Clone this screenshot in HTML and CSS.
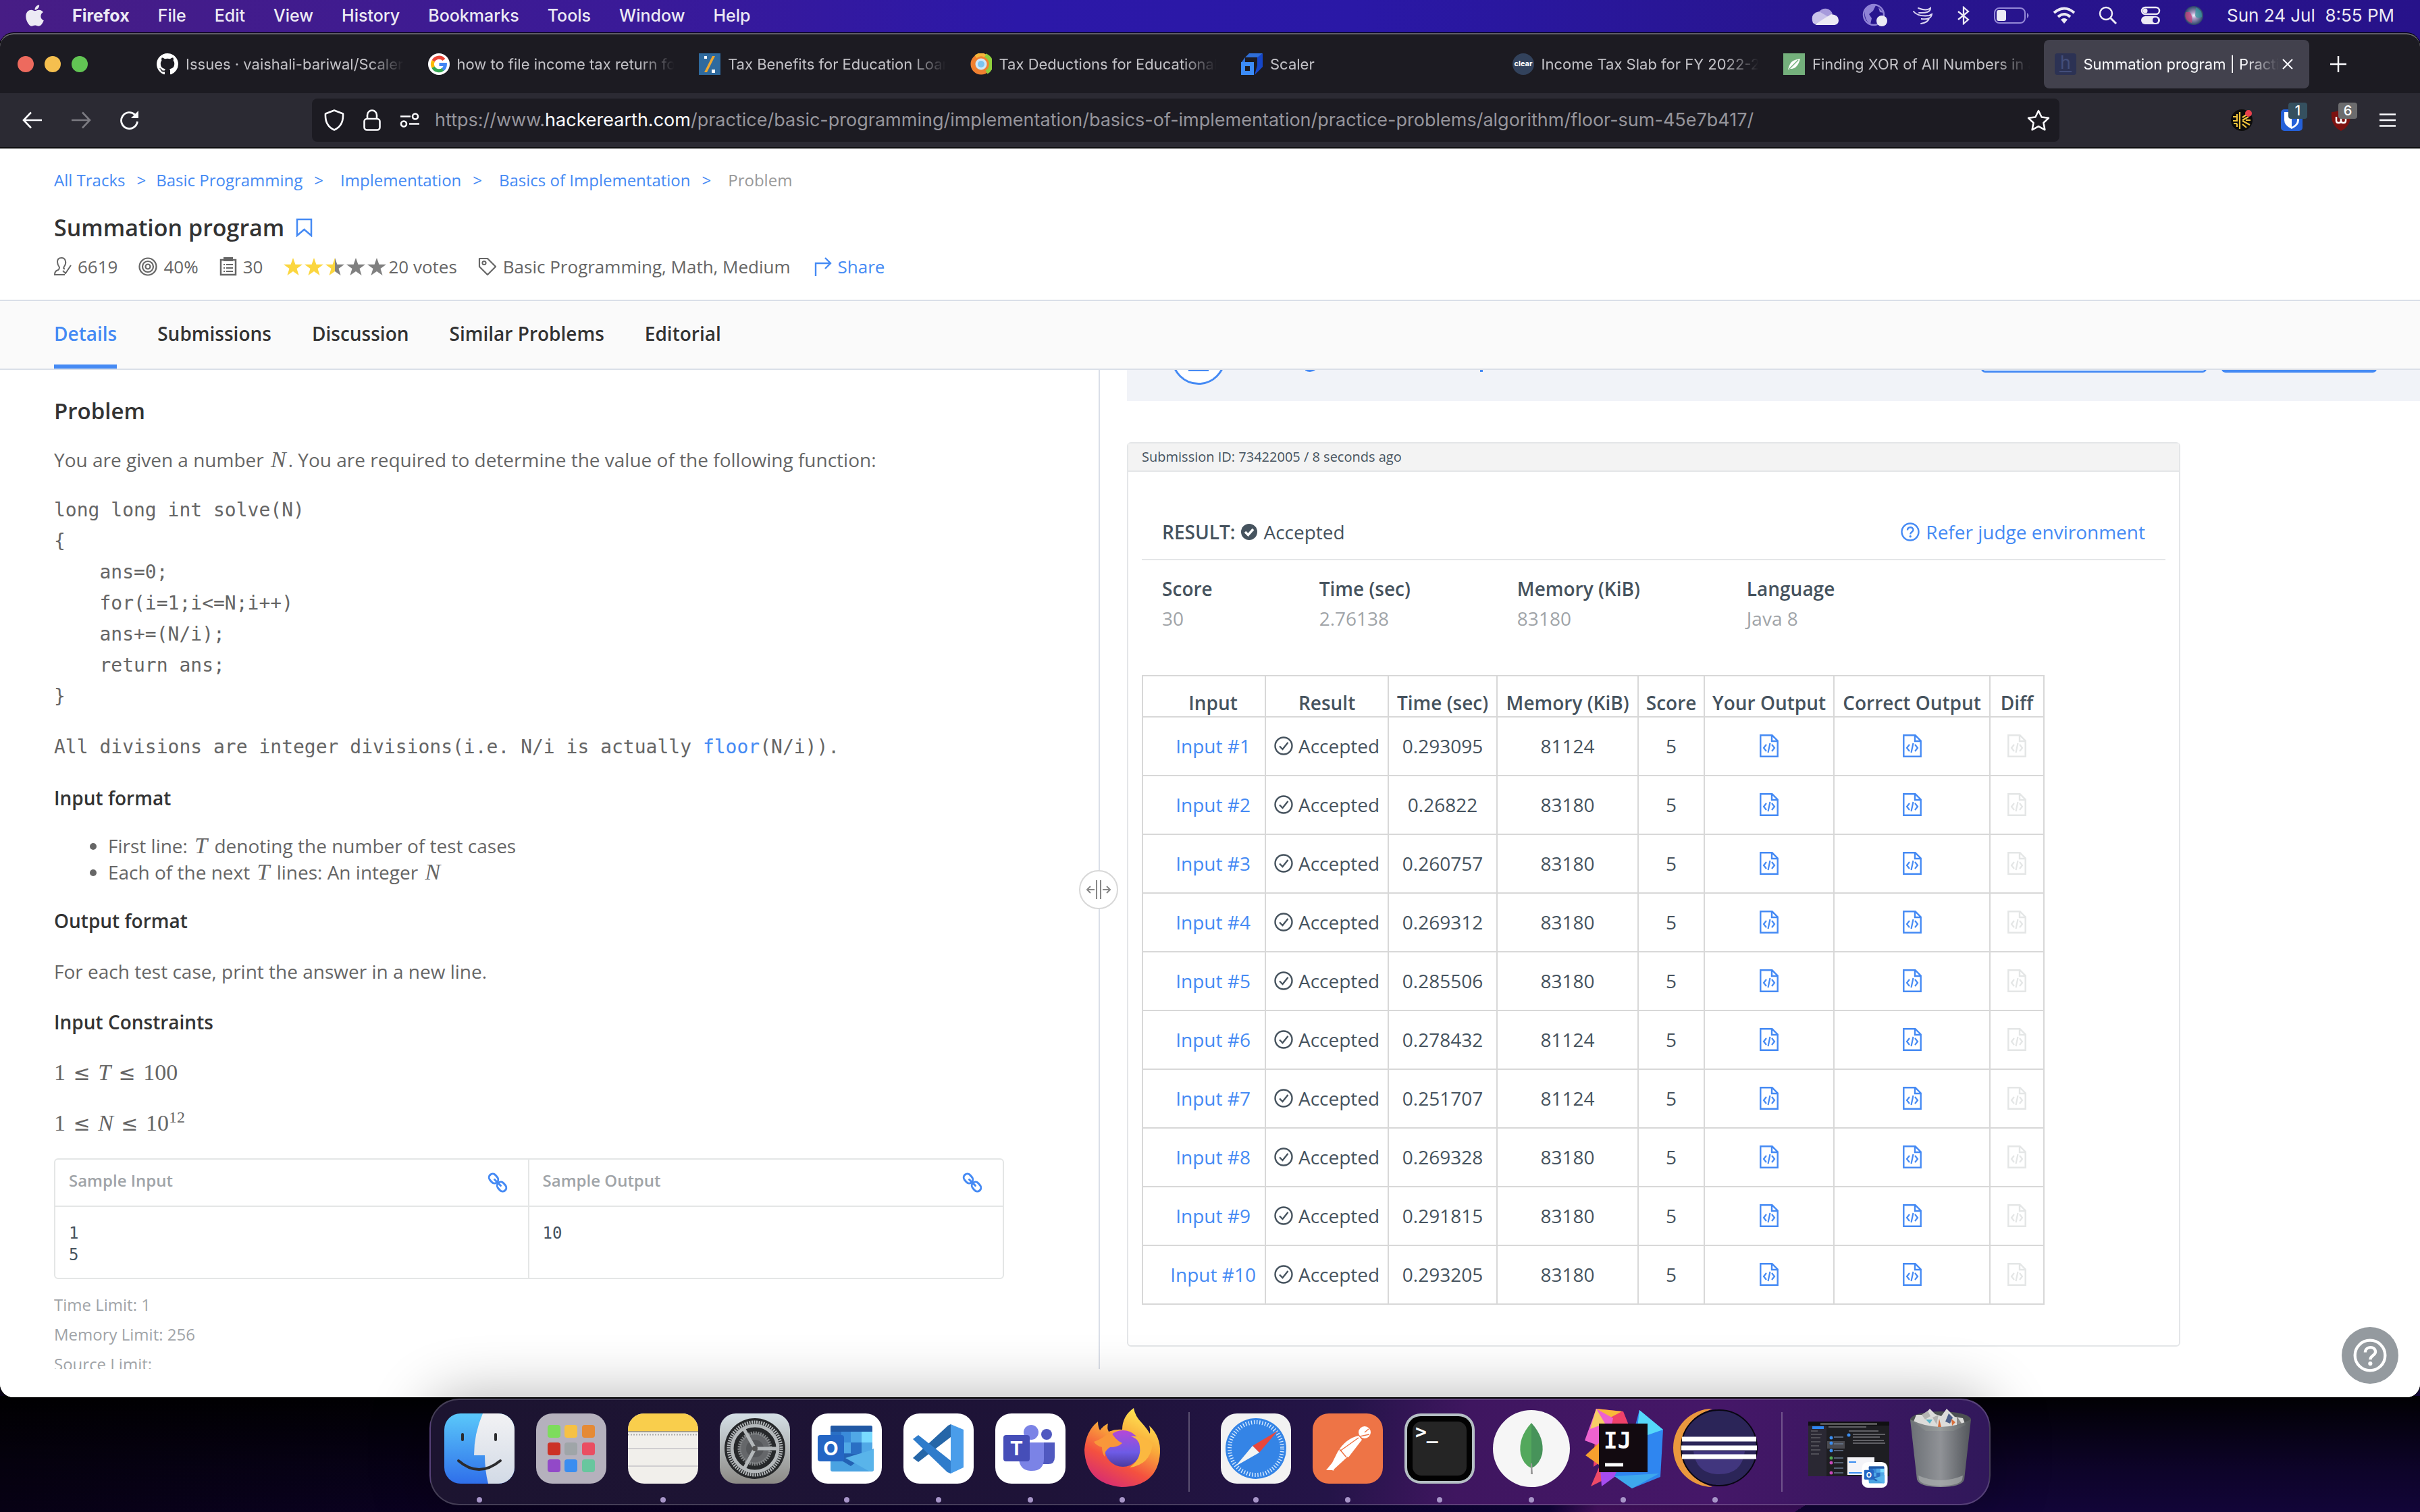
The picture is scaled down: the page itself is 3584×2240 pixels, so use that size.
FILE: index.html
```html
<!DOCTYPE html>
<html lang="en">
<head>
<meta charset="utf-8">
<title>Summation program | Practice Problems</title>
<link rel="stylesheet" href="styles.css">
</head>
<body>
<svg class="sprite" aria-hidden="true">
  <symbol id="doc" viewBox="0 0 28 34"><path d="M1.300 1.300h17.200l8.200 8.200v23.200H1.300z M18 1.500v8.500h8.500" fill="none" stroke="currentColor" stroke-width="2.400"/><path d="M10 15l-4 5 4 5 M18 15l4 5-4 5 M15.500 13l-3 14" fill="none" stroke="currentColor" stroke-width="2.200"/></symbol>
  <symbol id="ok" viewBox="0 0 28 28"><circle cx="14" cy="14" r="12.500" fill="none" stroke="currentColor" stroke-width="2.400"/><path d="M8 14.500l4.500 4.500 8-10" fill="none" stroke="currentColor" stroke-width="2.400"/></symbol>
  <symbol id="help" viewBox="0 0 28 28"><circle cx="14" cy="14" r="12.500" fill="none" stroke="currentColor" stroke-width="2.400"/><path d="M10 11.500c0-5.500 8.500-5.500 8.500-.5 0 3-4.300 3-4.300 6.500" fill="none" stroke="currentColor" stroke-width="2.400"/><circle cx="14.200" cy="20.800" r="1.700" fill="currentColor"/></symbol>
  <symbol id="chain" viewBox="0 0 30 30"><g fill="none" stroke="currentColor" stroke-width="3" stroke-linecap="round"><rect x="1.500" y="3.500" width="15" height="11" rx="5.500" transform="rotate(50 9 9)"/><rect x="13.500" y="15.500" width="15" height="11" rx="5.500" transform="rotate(50 21 21)"/><path d="M10.500 10.500l9 9"/></g></symbol>
  <symbol id="star" viewBox="0 0 28 26"><path d="M14 0l3.400 9.800H28l-8.500 6.300L22.600 26 14 20l-8.600 6 3.100-9.900L0 9.800h10.600z" fill="currentColor"/></symbol>
  <symbol id="outlook" viewBox="0 0 104 104"><rect width="104" height="104" rx="24" fill="#fff"/><path d="M31 18h56q3 0 3 3v56H28V21q0-3 3-3z" fill="#2a6fc4"/><path d="M30 18h57q3 0 3 3v6H28v-6q0-3 2-3z" fill="#2158a4"/><path d="M44 27h14v16H44z" fill="#3a8bd9"/><path d="M58 27h16v16H58z M44 43h14v16H44z" fill="#50a8e6"/><path d="M74 27h16v16H74z" fill="#79daff"/><path d="M74 43h16v16H74z" fill="#50a8e6"/><path d="M28 60l62 0-31 24z" fill="#2362b4"/><path d="M92 52v31q0 3-3 3H31q-3 0-3-3V60l30 18z" fill="#4aa3e2"/><path d="M92 53v31q-2 2-6 2L50 66z" fill="#59b4ea"/><rect x="9" y="32" width="39" height="39" rx="4" fill="#2466c4"/><text x="28.500" y="62" text-anchor="middle" class="g-sans" font-size="29" font-weight="700" fill="#fff">O</text></symbol>
</svg>

<header class="menubar">
  <nav class="menus">
    <svg class="apple" viewBox="0 0 384 512"><path fill="#eceaf4" d="M318.700 268.700c-.2-36.700 16.400-64.400 50-84.800-18.800-26.900-47.200-41.700-84.700-44.600-35.500-2.800-74.300 20.700-88.500 20.700-15 0-49.400-19.700-76.400-19.700C63.300 141.200 4 184.800 4 273.500q0 39.300 14.400 81.200c12.800 36.700 59 126.700 107.200 125.200 25.200-.6 43-17.900 75.800-17.900 31.800 0 48.300 17.900 76.400 17.900 48.600-.7 90.400-82.500 102.600-119.300-65.200-30.700-61.700-90-61.700-91.900zm-56.600-164.200c27.300-32.400 24.800-61.900 24-72.500-24.100 1.400-52 16.400-67.900 34.900-17.500 19.800-27.800 44.300-25.600 71.900 26.100 2 49.900-11.400 69.500-34.300z"/></svg>
    <button class="menu app">Firefox</button><button class="menu">File</button><button class="menu">Edit</button><button class="menu">View</button><button class="menu">History</button><button class="menu">Bookmarks</button><button class="menu">Tools</button><button class="menu">Window</button><button class="menu">Help</button>
  </nav>
  <div class="status">
    <svg width="42" height="28" viewBox="0 0 42 28"><path d="M11 10a11 10 0 0 1 21 2l-13 6-12 6z" fill="#a79bdc"/><path d="M3 25q-5-14 9-17l14 8-20 11z" fill="#c9c2ea"/><path d="M6 27l24-15q11 1 11 9 0 6-6 7H8z" fill="#eceaf4"/></svg>
    <svg width="40" height="36" viewBox="0 0 40 36"><circle cx="17" cy="17" r="15" fill="none" stroke="#8f82d6" stroke-width="2.500"/><path d="M4 8q8-7 16-5l-4 8-6 5 4 6-2 9Q2 24 4 8z M24 6l8 8-6-1z" fill="#8f82d6"/><circle cx="29" cy="26" r="8" fill="#eceaf4"/></svg>
    <svg width="32" height="28" viewBox="0 0 32 28"><path d="M9 3q12 5 18 0 0 8-17 7M2 8q6 8 24 6 0-1 3-2-1 9-16 7 8 1 12-1-1 6-12 8" fill="none" stroke="#dcd7f2" stroke-width="2" stroke-linecap="round"/></svg>
    <svg width="20" height="28" viewBox="0 0 20 28"><path d="M2 8l15 12-7 6V2l7 6L2 20" fill="none" stroke="#eceaf4" stroke-width="2.300"/></svg>
    <svg width="54" height="26" viewBox="0 0 54 26"><rect x="2" y="2" width="45" height="22" rx="7" fill="none" stroke="#9488d6" stroke-width="2"/><rect x="5" y="5" width="14" height="16" rx="3" fill="#eceaf4"/><path d="M50 9q5 4 0 8z" fill="#9488d6"/></svg>
    <svg width="34" height="26" viewBox="0 0 34 26"><g fill="none" stroke="#eceaf4" stroke-width="4"><path d="M2 9q15-13 30 0"/><path d="M8 15q9-8 18 0"/></g><path d="M12 19q5-4 10 0l-5 6z" fill="#eceaf4"/></svg>
    <svg width="28" height="28" viewBox="0 0 28 28"><circle cx="11" cy="11" r="9" fill="none" stroke="#eceaf4" stroke-width="2.500"/><path d="M17 17l9 9" stroke="#eceaf4" stroke-width="3"/></svg>
    <svg width="30" height="28" viewBox="0 0 30 28"><rect x="2" y="2" width="26" height="10" rx="5" fill="none" stroke="#eceaf4" stroke-width="2.500"/><circle cx="7" cy="7" r="3.500" fill="#eceaf4"/><rect x="1" y="15" width="28" height="12" rx="6" fill="#eceaf4"/><circle cx="22" cy="21" r="4" fill="#29168f"/></svg>
    <svg width="30" height="30" viewBox="0 0 30 30"><defs><radialGradient id="siri"><stop offset="0" stop-color="#f4f4ff"/><stop offset=".3" stop-color="#b0a0c8"/><stop offset="1" stop-color="#2a4468"/></radialGradient></defs><circle cx="15" cy="15" r="14" fill="url(#siri)"/><path d="M3 10q-3 12 9 16 2-10-3-16z" fill="#c83c78" opacity=".7"/><path d="M18 3q10 4 9 14-8 4-10-2z" fill="#2f9a9c" opacity=".7"/></svg>
    <time class="clock">Sun 24 Jul&nbsp; 8:55 PM</time>
  </div>
</header>

<main class="window">
  <div class="tabstrip">
    <div class="lights"><i class="red"></i><i class="amber"></i><i class="green"></i></div>
    <div class="tabs">
      <div class="tab"><svg class="fav" viewBox="0 0 16 16"><path fill="#fff" d="M8 0C3.580 0 0 3.580 0 8c0 3.540 2.290 6.530 5.470 7.590.4.070.550-.170.550-.380 0-.190-.010-.820-.010-1.490-2.010.370-2.530-.490-2.690-.940-.090-.230-.480-.940-.820-1.130-.280-.150-.680-.520-.010-.530.630-.010 1.080.580 1.230.820.720 1.210 1.870.870 2.330.660.070-.520.280-.870.510-1.070-1.780-.2-3.640-.890-3.640-3.950 0-.870.310-1.590.820-2.150-.080-.2-.360-1.020.080-2.120 0 0 .670-.210 2.200.820.640-.180 1.320-.270 2-.270s1.360.090 2 .270c1.530-1.040 2.200-.820 2.200-.820.440 1.100.160 1.920.080 2.120.510.560.820 1.270.820 2.150 0 3.070-1.870 3.750-3.650 3.950.290.250.540.730.540 1.480 0 1.070-.010 1.930-.010 2.200 0 .210.150.460.550.380A8.010 8.010 0 0 0 16 8c0-4.420-3.580-8-8-8z"/></svg><span class="tab-title">Issues · vaishali-bariwal/Scaler-</span></div>
      <div class="tab"><svg class="fav" viewBox="0 0 32 32"><circle cx="16" cy="16" r="16" fill="#fff"/><g fill="none" stroke-width="5"><path d="M23.400 9.500A9.500 9.500 0 0 0 7.700 11.300" stroke="#ea4335"/><path d="M7.800 11.200a9.500 9.500 0 0 0 0 9.600" stroke="#fbbc05"/><path d="M7.600 20.600a9.500 9.500 0 0 0 14.600 3" stroke="#34a853"/><path d="M21.800 24a9.500 9.500 0 0 0 3.600-7.500H16.500" stroke="#4285f4"/></g></svg><span class="tab-title">how to file income tax return for</span></div>
      <div class="tab"><svg class="fav" viewBox="0 0 32 32"><rect width="32" height="32" fill="#2f6a9e"/><path d="M24 4h-4L8 28h4z" fill="#f0a830"/><path d="M8 4h4v4H8z M19 24h5v5h-5z" fill="#fff"/></svg><span class="tab-title">Tax Benefits for Education Loan -</span></div>
      <div class="tab"><svg class="fav" viewBox="0 0 32 32"><circle cx="16" cy="16" r="12" fill="#cfe8fa" stroke="#f08030" stroke-width="7"/><path d="M22 3a14 14 0 0 1 2 25" fill="none" stroke="#8fcf3c" stroke-width="6"/><path d="M8 5q8-6 14-1" fill="none" stroke="#f6b73c" stroke-width="5"/><circle cx="16" cy="16" r="5" fill="#7cc4f0"/></svg><span class="tab-title">Tax Deductions for Educational L</span></div>
      <div class="tab"><svg class="fav" viewBox="0 0 32 32"><path d="M12 0h20l-5 6H6z" fill="#2f6fd8"/><path d="M32 0v20L20 32l4-14V6z" fill="#1546c8"/><path d="M6 6L0 14h6z" fill="#2f6fd8"/><path d="M0 13h19v19H0z M6 19v7h7v-7z" fill="#3c8cf8" fill-rule="evenodd"/></svg><span class="tab-title">Scaler</span></div>
      <div class="tab"><svg class="fav" viewBox="0 0 32 32"><circle cx="16" cy="16" r="16" fill="#32425c"/><text x="16" y="19" text-anchor="middle" class="g-sans" font-size="11" font-weight="700" fill="#fff">clear</text></svg><span class="tab-title">Income Tax Slab for FY 2022-23,</span></div>
      <div class="tab"><svg class="fav" viewBox="0 0 32 32"><rect width="32" height="32" fill="#74b07c"/><path d="M25 8q-13 2-15 8-2 4-3 8l3-1q11 1 15-15z" fill="#fff"/><path d="M9 23l13-13" stroke="#74b07c" stroke-width="1.500"/></svg><span class="tab-title">Finding XOR of All Numbers in a</span></div>
      <div class="tab active"><svg class="fav" viewBox="0 0 32 32"><rect width="32" height="32" rx="4" fill="#2c3254"/><text x="16" y="23" text-anchor="middle" class="g-sans" font-size="27" fill="#434e7a">h</text><path d="M7 27h18" stroke="#434e7a" stroke-width="2"/></svg><span class="tab-title">Summation program | Practice</span><button class="icon-btn" aria-label="Close tab"><svg width="16" height="16" viewBox="0 0 16 16"><path d="M1 1l14 14M15 1L1 15" stroke="#fbfbfe" stroke-width="2"/></svg></button></div>
    </div>
    <button class="icon-btn new-tab" aria-label="New tab"><svg width="26" height="26" viewBox="0 0 26 26"><path d="M13 1v24M1 13h24" stroke="#fbfbfe" stroke-width="2.500"/></svg></button>
  </div>

  <div class="toolbar">
    <div class="nav-btns">
      <button class="icon-btn" aria-label="Back"><svg width="30" height="26" viewBox="0 0 30 26"><path d="M29 13H2M13 1.500L2 13l11 11.500" fill="none" stroke="#fbfbfe" stroke-width="2.600"/></svg></button>
      <button class="icon-btn" aria-label="Forward"><svg width="30" height="26" viewBox="0 0 30 26"><path d="M1 13h27M17 1.500L28 13 17 24.500" fill="none" stroke="#7c7b82" stroke-width="2.600"/></svg></button>
      <button class="icon-btn" aria-label="Reload"><svg width="30" height="28" viewBox="0 0 30 28"><path d="M26.500 16A12 12 0 1 1 23 6" fill="none" stroke="#fbfbfe" stroke-width="2.800"/><path d="M28 0v11H17z" fill="#fbfbfe"/></svg></button>
    </div>
    <div class="urlbar">
      <svg width="30" height="32" viewBox="0 0 30 32"><path d="M15 1.500l13 5q1 18-13 24Q1 24.500 2 6.500z" fill="none" stroke="#fbfbfe" stroke-width="2.600" stroke-linejoin="round"/></svg>
      <svg width="26" height="32" viewBox="0 0 26 32"><rect x="1.500" y="14" width="23" height="16.500" rx="4" fill="none" stroke="#fbfbfe" stroke-width="2.600"/><path d="M6 14V8.500a7 7 0 0 1 14 0V14" fill="none" stroke="#fbfbfe" stroke-width="2.600"/></svg>
      <svg width="30" height="22" viewBox="0 0 30 22"><path d="M1 5.500h15M14 16.500h15" stroke="#fbfbfe" stroke-width="2.600"/><circle cx="23" cy="5.500" r="4" fill="none" stroke="#fbfbfe" stroke-width="2.600"/><circle cx="6" cy="16.500" r="4" fill="none" stroke="#fbfbfe" stroke-width="2.600"/></svg>
      <div class="url" role="textbox" aria-label="Address">https://www.<b>hackerearth.com</b>/practice/basic-programming/implementation/basics-of-implementation/practice-problems/algorithm/floor-sum-45e7b417/</div>
      <button class="icon-btn" aria-label="Bookmark this page"><svg width="34" height="32" viewBox="0 0 34 32"><path d="M17 2l4.600 9.500 10.400 1.300-7.600 7.200 2 10.300L17 25.200l-9.400 5.100 2-10.300L2 12.800l10.400-1.300z" fill="none" stroke="#fbfbfe" stroke-width="2.500" stroke-linejoin="round"/></svg></button>
    </div>
    <div class="exts">
      <span class="ext"><svg width="32" height="32" viewBox="0 0 32 32"><circle cx="16" cy="16" r="16" fill="#0c0c0c"/><path d="M3 11h6v6H3M4 21h5M13 4v25M17 12l6-4M17 16l9-5M17 17l11 6M17 22l6 5M9 7v4M9 21v5M22 16h7" stroke="#f2c53d" stroke-width="2.200" fill="none"/><circle cx="26" cy="6" r="5" fill="#e8414c"/></svg></span>
      <span class="ext"><svg width="32" height="32" viewBox="0 0 32 32"><rect width="32" height="32" rx="5" fill="#2460d8"/><path d="M5 4h22v12q0 8-11 13Q5 24 5 16z" fill="#fff"/><path d="M16 7h8v9q0 6-8 10z" fill="#2460d8"/></svg><span class="badge teal">1</span></span>
      <span class="ext"><svg width="30" height="32" viewBox="0 0 30 32"><path d="M15 0q7 4 14 4 2 20-14 28Q-1 24 1 4q7 0 14-4z" fill="#7c1210"/><path d="M8 11v6q0 3 3.500 3t3.500-3v-4v4q0 3 3.500 3t3.500-3v-6" fill="none" stroke="#fff" stroke-width="2.500"/></svg><span class="badge">6</span></span>
      <button class="icon-btn" aria-label="Open menu"><svg width="24" height="20" viewBox="0 0 24 20"><path d="M0 1.500h24M0 10h24M0 18.500h24" stroke="#fbfbfe" stroke-width="2.600"/></svg></button>
    </div>
  </div>

  <div class="page">
    <div class="page-head">
      <nav class="crumbs"><a href="#">All Tracks</a><span class="sep">&gt;</span><a href="#" class="tight">Basic Programming</a><span class="sep">&gt;</span><a href="#">Implementation</a><span class="sep">&gt;</span><a href="#">Basics of Implementation</a><span class="sep">&gt;</span><span class="here">Problem</span></nav>
      <h1 class="title">Summation program <svg width="26" height="28" viewBox="0 0 26 28"><path d="M2 2h21v24l-10.500-9L2 26z" fill="none" stroke="currentColor" stroke-width="2.500"/></svg></h1>
      <div class="stats">
        <span class="stat"><svg width="26" height="28" viewBox="0 0 26 28"><path d="M16 17q-3 1-1-3 3-4 2-8-1-5-6-5-6 0-6 6 0 4 3 8 0 3-2 4-5 1-5 7h15M13 20l4 4 8-12" fill="none" stroke="currentColor" stroke-width="2"/></svg>6619</span>
        <span class="stat"><svg width="28" height="28" viewBox="0 0 28 28"><g fill="none" stroke="currentColor" stroke-width="2.200"><circle cx="14" cy="14" r="12.500"/><circle cx="14" cy="14" r="8"/><circle cx="14" cy="14" r="3.500"/></g></svg>40%</span>
        <span class="stat"><svg width="26" height="28" viewBox="0 0 26 28"><path d="M2 4h22v22H2z" fill="none" stroke="currentColor" stroke-width="2.500"/><path d="M6 0h14v6H6z" fill="currentColor"/><path d="M6 11h2M6 16h2M6 21h2M10 11h10M10 16h10M10 21h10" stroke="currentColor" stroke-width="2.200"/></svg>30</span>
        <span class="stat rating"><svg class="st on"><use href="#star"/></svg><svg class="st on"><use href="#star"/></svg><svg class="st" viewBox="0 0 28 26"><path d="M14 0l3.400 9.800H28l-8.500 6.300L22.600 26 14 20z" fill="#808080"/><path d="M14 0v20l-8.600 6 3.100-9.900L0 9.800h10.600z" fill="#fbd63f"/></svg><svg class="st"><use href="#star"/></svg><svg class="st"><use href="#star"/></svg>20 votes</span>
        <span class="stat tags"><svg width="28" height="28" viewBox="0 0 28 28"><path d="M2 2h12l12 12-12 12L2 14z" fill="none" stroke="currentColor" stroke-width="2.200" stroke-linejoin="round"/><circle cx="9" cy="8.500" r="2.600" fill="none" stroke="currentColor" stroke-width="2"/></svg>Basic Programming, Math, Medium</span>
        <a href="#" class="stat"><svg width="26" height="28" viewBox="0 0 26 28"><path d="M2 28V9h21M16 1l8 8-8 8" fill="none" stroke="currentColor" stroke-width="2.400"/></svg>Share</a>
      </div>
    </div>
    <nav class="page-tabs"><a href="#" class="current">Details</a><a href="#">Submissions</a><a href="#">Discussion</a><a href="#">Similar Problems</a><a href="#">Editorial</a></nav>

    <div class="split">
      <section class="problem">
        <div class="statement">
          <h2>Problem</h2>
          <p>You are given a number <i class="math">N</i>. You are required to determine the value of the following function:</p>
          <pre>long long int solve(N)
{
    ans=0;
    for(i=1;i&lt;=N;i++)
    ans+=(N/i);
    return ans;
}</pre>
          <p class="mono">All divisions are integer divisions(i.e. N/i is actually <a href="#">floor</a>(N/i)).</p>
          <h3>Input format</h3>
          <ul>
            <li>First line: <i class="math">T</i> denoting the number of test cases</li>
            <li>Each of the next <i class="math">T</i> lines: An integer <i class="math">N</i></li>
          </ul>
          <h3>Output format</h3>
          <p>For each test case, print the answer in a new line.</p>
          <h3>Input Constraints</h3>
          <p class="math">1 <span class="rel">≤</span> <i>T</i> <span class="rel">≤</span> 100</p>
          <p class="math">1 <span class="rel">≤</span> <i>N</i> <span class="rel">≤</span> 10<sup>12</sup></p>
          <table class="samples">
            <thead><tr><th>Sample Input<button class="icon-btn" aria-label="Open sample input"><svg width="30" height="30"><use href="#chain"/></svg></button></th><th>Sample Output<button class="icon-btn" aria-label="Open sample output"><svg width="30" height="30"><use href="#chain"/></svg></button></th></tr></thead>
            <tbody><tr><td>1<br>5</td><td>10</td></tr></tbody>
          </table>
        </div>
        <div class="limits">Time Limit: 1<br>Memory Limit: 256<br>Source Limit:</div>
        <button class="drag" aria-label="Resize panels"><svg width="36" height="30" viewBox="0 0 36 30"><path d="M15 1v28M21 1v28M1 15h11M24 15h11M6 10l-5 5 5 5M30 10l5 5-5 5" fill="none" stroke="#888" stroke-width="2"/></svg></button>
      </section>

      <section class="submission">
        <div class="banner">
          <svg class="banner-icon" viewBox="0 0 80 80"><circle cx="40" cy="40" r="38.500" fill="#fff" stroke="#458af4" stroke-width="3"/><path d="M25 58h30" stroke="#458af4" stroke-width="4"/></svg>
          <svg class="banner-text" viewBox="0 0 270 8"><path d="M0 0q7 5 14 0" fill="none" stroke="#458af4" stroke-width="3"/><path d="M261 0v4" stroke="#458af4" stroke-width="4"/></svg>
          <span class="banner-actions"><button class="btn outline" aria-label="Dismiss"></button><button class="btn solid" aria-label="Continue"></button></span>
        </div>
        <article class="card">
          <header class="card-head">Submission ID: 73422005 / 8 seconds ago</header>
          <div class="card-body">
            <div class="result"><span class="verdict"><b>RESULT:</b><svg width="24" height="24" viewBox="0 0 24 24"><circle cx="12" cy="12" r="12" fill="#46535e"/><path d="M6 12l4.500 4.500L18 8" fill="none" stroke="#fff" stroke-width="3.500"/></svg>Accepted</span><a href="#" class="env"><svg width="28" height="28"><use href="#help"/></svg>Refer judge environment</a></div>
            <dl class="meta">
              <div><dt>Score</dt><dd>30</dd></div><div><dt>Time (sec)</dt><dd>2.76138</dd></div><div><dt>Memory (KiB)</dt><dd>83180</dd></div><div><dt>Language</dt><dd>Java 8</dd></div>
            </dl>
            <table class="runs">
              <colgroup><col class="c-input"><col class="c-result"><col class="c-time"><col class="c-mem"><col class="c-score"><col class="c-yours"><col class="c-correct"><col class="c-diff"></colgroup>
              <thead><tr><th>Input</th><th>Result</th><th>Time (sec)</th><th>Memory (KiB)</th><th>Score</th><th>Your Output</th><th>Correct Output</th><th>Diff</th></tr></thead>
              <tbody>
              <tr><td><a href="#">Input #1</a></td><td><span class="acc"><svg><use href="#ok"/></svg>Accepted</span></td><td>0.293095</td><td>81124</td><td>5</td><td><a href="#" aria-label="Your output"><svg class="doc"><use href="#doc"/></svg></a></td><td><a href="#" aria-label="Correct output"><svg class="doc"><use href="#doc"/></svg></a></td><td><svg class="doc off"><use href="#doc"/></svg></td></tr>
              <tr><td><a href="#">Input #2</a></td><td><span class="acc"><svg><use href="#ok"/></svg>Accepted</span></td><td>0.26822</td><td>83180</td><td>5</td><td><a href="#" aria-label="Your output"><svg class="doc"><use href="#doc"/></svg></a></td><td><a href="#" aria-label="Correct output"><svg class="doc"><use href="#doc"/></svg></a></td><td><svg class="doc off"><use href="#doc"/></svg></td></tr>
              <tr><td><a href="#">Input #3</a></td><td><span class="acc"><svg><use href="#ok"/></svg>Accepted</span></td><td>0.260757</td><td>83180</td><td>5</td><td><a href="#" aria-label="Your output"><svg class="doc"><use href="#doc"/></svg></a></td><td><a href="#" aria-label="Correct output"><svg class="doc"><use href="#doc"/></svg></a></td><td><svg class="doc off"><use href="#doc"/></svg></td></tr>
              <tr><td><a href="#">Input #4</a></td><td><span class="acc"><svg><use href="#ok"/></svg>Accepted</span></td><td>0.269312</td><td>83180</td><td>5</td><td><a href="#" aria-label="Your output"><svg class="doc"><use href="#doc"/></svg></a></td><td><a href="#" aria-label="Correct output"><svg class="doc"><use href="#doc"/></svg></a></td><td><svg class="doc off"><use href="#doc"/></svg></td></tr>
              <tr><td><a href="#">Input #5</a></td><td><span class="acc"><svg><use href="#ok"/></svg>Accepted</span></td><td>0.285506</td><td>83180</td><td>5</td><td><a href="#" aria-label="Your output"><svg class="doc"><use href="#doc"/></svg></a></td><td><a href="#" aria-label="Correct output"><svg class="doc"><use href="#doc"/></svg></a></td><td><svg class="doc off"><use href="#doc"/></svg></td></tr>
              <tr><td><a href="#">Input #6</a></td><td><span class="acc"><svg><use href="#ok"/></svg>Accepted</span></td><td>0.278432</td><td>81124</td><td>5</td><td><a href="#" aria-label="Your output"><svg class="doc"><use href="#doc"/></svg></a></td><td><a href="#" aria-label="Correct output"><svg class="doc"><use href="#doc"/></svg></a></td><td><svg class="doc off"><use href="#doc"/></svg></td></tr>
              <tr><td><a href="#">Input #7</a></td><td><span class="acc"><svg><use href="#ok"/></svg>Accepted</span></td><td>0.251707</td><td>81124</td><td>5</td><td><a href="#" aria-label="Your output"><svg class="doc"><use href="#doc"/></svg></a></td><td><a href="#" aria-label="Correct output"><svg class="doc"><use href="#doc"/></svg></a></td><td><svg class="doc off"><use href="#doc"/></svg></td></tr>
              <tr><td><a href="#">Input #8</a></td><td><span class="acc"><svg><use href="#ok"/></svg>Accepted</span></td><td>0.269328</td><td>83180</td><td>5</td><td><a href="#" aria-label="Your output"><svg class="doc"><use href="#doc"/></svg></a></td><td><a href="#" aria-label="Correct output"><svg class="doc"><use href="#doc"/></svg></a></td><td><svg class="doc off"><use href="#doc"/></svg></td></tr>
              <tr><td><a href="#">Input #9</a></td><td><span class="acc"><svg><use href="#ok"/></svg>Accepted</span></td><td>0.291815</td><td>83180</td><td>5</td><td><a href="#" aria-label="Your output"><svg class="doc"><use href="#doc"/></svg></a></td><td><a href="#" aria-label="Correct output"><svg class="doc"><use href="#doc"/></svg></a></td><td><svg class="doc off"><use href="#doc"/></svg></td></tr>
              <tr><td><a href="#">Input #10</a></td><td><span class="acc"><svg><use href="#ok"/></svg>Accepted</span></td><td>0.293205</td><td>83180</td><td>5</td><td><a href="#" aria-label="Your output"><svg class="doc"><use href="#doc"/></svg></a></td><td><a href="#" aria-label="Correct output"><svg class="doc"><use href="#doc"/></svg></a></td><td><svg class="doc off"><use href="#doc"/></svg></td></tr>
              </tbody>
            </table>
          </div>
        </article>
      </section>
    </div>
    <button class="help-fab" aria-label="Help"><svg width="50" height="50"><use href="#help"/></svg></button>
  </div>
</main>

<footer class="dock">
  <span class="app-icon run"><svg viewBox="0 0 104 104"><defs><linearGradient id="f1" x2="0" y2="1"><stop stop-color="#5ac8fa"/><stop offset="1" stop-color="#2f6fea"/></linearGradient><linearGradient id="f2" x2="0" y2="1"><stop stop-color="#f2f2f4"/><stop offset="1" stop-color="#d2dae6"/></linearGradient><clipPath id="rr"><rect width="104" height="104" rx="24"/></clipPath></defs><g clip-path="url(#rr)"><rect width="104" height="104" fill="url(#f1)"/><path d="M57 0h47v104H65q-5-20-5-42H44Q44 30 57 0z" fill="url(#f2)"/><path d="M27 31v8M76 31v8M21 70q30 26 62 0" fill="none" stroke="#2b2b2e" stroke-width="4" stroke-linecap="round"/></g></svg></span>
  <span class="app-icon"><svg viewBox="0 0 104 104"><rect width="104" height="104" rx="24" fill="#b5b1bd"/><rect x="17" y="17" width="19" height="19" rx="4" fill="#7ddc5c"/><rect x="42" y="17" width="19" height="19" rx="4" fill="#f6c144"/><rect x="68" y="17" width="19" height="19" rx="4" fill="#e58a36"/><rect x="17" y="43" width="19" height="19" rx="4" fill="#cc3126"/><rect x="42" y="43" width="19" height="19" rx="4" fill="#9fa5a8"/><rect x="68" y="43" width="19" height="19" rx="4" fill="#ea4e62"/><rect x="17" y="68" width="19" height="19" rx="4" fill="#9249c8"/><rect x="42" y="68" width="19" height="19" rx="4" fill="#3a8df0"/><rect x="68" y="68" width="19" height="19" rx="4" fill="#68c69e"/></svg></span>
  <span class="app-icon run"><svg viewBox="0 0 104 104"><g clip-path="url(#rr)"><rect width="104" height="104" fill="#f1efeb"/><rect width="104" height="27" fill="#f9ce4c"/><path d="M0 27h104" stroke="#8d8a83" stroke-width="1.500"/><path d="M0 31.500h104" stroke="#aaa" stroke-width="2" stroke-dasharray="2 2"/><path d="M0 52h104M0 78h104" stroke="#d0ced0" stroke-width="2"/></g></svg></span>
  <span class="app-icon"><svg viewBox="0 0 104 104"><defs><linearGradient id="s1" x2="0" y2="1"><stop stop-color="#d5e0e6"/><stop offset="1" stop-color="#8c8a86"/></linearGradient></defs><rect width="104" height="104" rx="24" fill="url(#s1)"/><circle cx="52" cy="52" r="45" fill="#26282a"/><circle cx="52" cy="52" r="39" fill="none" stroke="#b4b8ba" stroke-width="5" stroke-dasharray="2 1.500"/><circle cx="52" cy="52" r="34" fill="none" stroke="#b4b8ba" stroke-width="5"/><circle cx="52" cy="52" r="23" fill="#65676a" stroke="#85888a" stroke-width="5" stroke-dasharray="2 1.500"/><circle cx="52" cy="52" r="13" fill="#55575a"/><path d="M52 52h33M52 52L35 22M52 52L36 82" stroke="#b4b8ba" stroke-width="5"/><circle cx="52" cy="52" r="4" fill="#555"/></svg></span>
  <span class="app-icon run"><svg><use href="#outlook"/></svg></span>
  <span class="app-icon run"><svg viewBox="0 0 104 104"><rect width="104" height="104" rx="24" fill="#fff"/><path d="M14 66l8 6 48-37V16L66 18z" fill="#2566a8"/><path d="M14 38l8-6 48 38v19l-5-2z" fill="#2f7ccb"/><path d="M70 16l19 8v56l-19 9z" fill="#4a9dea"/></svg></span>
  <span class="app-icon run"><svg viewBox="0 0 104 104"><rect width="104" height="104" rx="24" fill="#fff"/><circle cx="53" cy="28" r="11" fill="#7b83e6"/><circle cx="76" cy="31" r="8" fill="#5059c0"/><path d="M70 43h18v22q0 11-11 10h-7z" fill="#5059c0"/><path d="M35 43h37v24q0 18-18 18T35 67z" fill="#7b83e6"/><rect x="12" y="32" width="39" height="39" rx="4" fill="#464eb8"/><text x="31.500" y="62" text-anchor="middle" class="g-sans" font-size="29" font-weight="700" fill="#fff">T</text></svg></span>
  <span class="app-icon run"><svg class="bleed" viewBox="0 0 116 118"><defs><linearGradient id="ff" x1=".8" y1="0" x2=".3" y2="1"><stop stop-color="#fff056"/><stop offset=".4" stop-color="#f9a73a"/><stop offset=".7" stop-color="#f4513f"/><stop offset="1" stop-color="#d62c74"/></linearGradient><linearGradient id="fp" x2="0" y2="1"><stop stop-color="#b548d8"/><stop offset=".6" stop-color="#6e5be6"/><stop offset="1" stop-color="#4b3a9e"/></linearGradient></defs><path d="M2 62Q4 34 22 20q0 8 3 13 5-7 12-10-2 7 1 12 10-4 20-3Q58 12 75 0q2 12 12 22 8 9 12 16 1-6-1-12 17 16 16 40-3 50-57 51Q4 112 2 62z" fill="url(#ff)"/><circle cx="59" cy="60" r="27" fill="url(#fp)"/><path d="M16 50q14-5 25-16 6 13 17 18-6 6-18 6-8 4-8 14-4-6-4-14-8-2-12-8z" fill="#f9973a"/><path d="M71 42q8 2 12 10 6 22-14 36 30-4 34-34Q90 40 71 42z" fill="#fbb840"/></svg></span>
  <i class="dock-sep"></i>
  <span class="app-icon run"><svg viewBox="0 0 104 104"><rect width="104" height="104" rx="24" fill="#f2f2f2"/><circle cx="52" cy="52" r="45" fill="#3484e6"/><circle cx="52" cy="52" r="39" fill="none" stroke="#d8ebff" stroke-width="6" stroke-dasharray="1.400 2.700"/><path d="M84 26L57 58l-10-10z" fill="#e8473c"/><path d="M22 78l25-30 10 10z" fill="#f2f4f4"/></svg></span>
  <span class="app-icon run"><svg viewBox="0 0 104 104"><rect width="104" height="104" rx="24" fill="#ee7446"/><circle cx="77" cy="28" r="9" fill="#fff"/><path d="M77 28l6-5M70 34l14-3" stroke="#ee7446" stroke-width="1.500"/><path d="M68 33l5 6-20 26-16-8q12-20 31-24zM37 57l16 6-24 22 3-1-12 0 9-11zM21 84l5-6 6 6z" fill="#fff"/><path d="M40 56l28-20M50 65l-10-12" stroke="#ee7446" stroke-width="1.500"/></svg></span>
  <span class="app-icon run"><svg viewBox="0 0 104 104"><rect width="104" height="104" rx="24" fill="#b5bfc4"/><rect x="4" y="4" width="96" height="96" rx="20" fill="#020202"/><rect x="12" y="12" width="80" height="80" rx="13" fill="#252525"/><text x="16" y="37" class="g-mono" font-size="28" font-weight="700" fill="#fff">&gt;_</text></svg></span>
  <span class="app-icon run"><svg class="bleed" viewBox="0 0 116 118"><circle cx="58" cy="60" r="57" fill="#f6f6f6"/><path d="M58 22Q38 44 42 68q4 16 16 21z" fill="#53a85c"/><path d="M58 22q20 22 16 46-4 16-16 21z" fill="#47935a"/><path d="M57 82h2l1 16h-3z" fill="#999"/></svg></span>
  <span class="app-icon run"><svg class="bleed" viewBox="0 0 116 118"><path d="M18 1l40 4 16 40-60 42z" fill="#f0426a"/><path d="M18 1l38 4-30 16z" fill="#f8b93a"/><path d="M18 1L1 48l32 12 10-45z" fill="#ee62cf"/><path d="M18 1l-9 30 22-8z" fill="#f7cd66"/><path d="M22 52L2 70l20 14z" fill="#f7a02e"/><path d="M22 66v22L10 116l48-24z" fill="#ee4a68"/><path d="M26 116l30-22-32-4z" fill="#a64cf0"/><path d="M82 3l35 29-4 70-42 17-26-18 24-50z" fill="#2f86f0"/><path d="M82 3l35 29-40 14z" fill="#55d8fa"/><path d="M45 101l66-4-40 22z" fill="#3ea8ec"/><rect x="22" y="23" width="72" height="72" fill="#120a10"/><text x="29" y="60" class="g-mono" font-size="34" font-weight="700" fill="#fff">IJ</text><path d="M31 84h27" stroke="#fff" stroke-width="5"/></svg></span>
  <span class="app-icon run"><svg class="bleed" viewBox="0 0 116 118"><path d="M54 1A58 58 0 0 0 54 117Q8 100 8 59T54 1z" fill="#ea983e"/><circle cx="64" cy="59" r="56" fill="#2b2558" stroke="#080612" stroke-width="2"/><path d="M26 64h76q-4 34-38 34T26 64z" fill="#41367e"/><path d="M9 46h110M8 59h112M9 72h110" stroke="#fff" stroke-width="7"/></svg></span>
  <i class="dock-sep"></i>
  <span class="app-icon"><svg class="thumb" viewBox="0 0 120 104"><rect y="6" width="120" height="81" fill="#1e1e22"/><rect y="6" width="27" height="81" fill="#2a2833"/><rect y="6" width="120" height="6" fill="#101012"/><rect x="18" y="8" width="84" height="3" fill="#555"/><rect x="6" y="13" width="17" height="4" fill="#2f86f0"/><path d="M30 14h56M60 20h44M66 25h48M66 29h40M66 34h46M66 38h48" stroke="#77777c" stroke-width="1.500"/><rect x="28" y="35" width="26" height="11" fill="#4a4a50"/><path d="M4 20h10M4 25h16M4 30h14M4 36h14M4 42h12M4 48h14M4 54h12" stroke="#77777c" stroke-width="1.200"/><g fill="#3a8df0"><circle cx="34" cy="30" r="2.500"/><circle cx="34" cy="38" r="2.500"/><circle cx="34" cy="49" r="2.500"/><circle cx="60" cy="26" r="2.500"/></g><g fill="#c548b8"><circle cx="34" cy="67" r="2.500"/><circle cx="34" cy="82" r="2.500"/></g><circle cx="34" cy="60" r="2.500" fill="#52a852"/><path d="M38 29h14M38 39h14M38 49h14M38 60h14M38 67h14M38 75h14M38 82h14" stroke="#6a7a90" stroke-width="1.500"/><rect x="58" y="59" width="40" height="26" fill="#f4f4f8"/><path d="M60 66h11M60 82h20" stroke="#3a8df0" stroke-width="2"/><use href="#outlook" x="79" y="66" width="39" height="38"/></svg></span>
  <span class="app-icon"><svg class="bleed" viewBox="0 0 116 118"><defs><linearGradient id="tr"><stop stop-color="#6e7476"/><stop offset=".5" stop-color="#95999a"/><stop offset="1" stop-color="#54595b"/></linearGradient></defs><ellipse cx="58" cy="17" rx="45" ry="12" fill="#4c5052"/><path d="M18 20l4-10 12 0 8-9 8 8 9 3 8-11 12 12 12 2 4 10-18 9H36z" fill="#dcdcda"/><path d="M30 10l9-6 4 8-8 5zM46 14l9-4-3 14z" fill="#b4b4b2"/><path d="M36 17l10 0-4 6z" fill="#58b4c8"/><path d="M70 8l6 6-4 9-7-3z" fill="#4c5f88"/><path d="M74 16l6 5-5 5z M56 16l3 12-5 0z" fill="#d8703c"/><path d="M82 12l8 12-8 3z" fill="#8a8a88"/><path d="M13 17q45 22 90 0L93 106q-4 11-35 11t-35-11z" fill="url(#tr)" opacity=".95"/><path d="M25 100q33 14 66 0l-1 6q-4 9-32 9t-32-9z" fill="#b0b4b4" opacity=".6"/></svg></span>
</footer>
</body>
</html>
```
FILE: styles.css
```css
* { box-sizing: border-box; }
:root {
  --blue: #458af4;
  --ink: #46535e;
  --line: #dadfe8;
  --ui: Inter, "Liberation Sans", sans-serif;
  --text: "Open Sans", "Noto Sans", sans-serif;
  --mono: "DejaVu Sans Mono", monospace;
}
html, body { height: 100%; margin: 0; }
body {
  display: flex;
  flex-direction: column;
  overflow: hidden;
  font-family: var(--text);
  background:
    linear-gradient(90deg, #471d85 0, #3a1a98 26%, #2c18a8 42%, #2a18a6 56%, #28158f 75%, #27128a 100%) top / 100% 60px no-repeat,
    linear-gradient(180deg, rgba(0,0,0,.95), rgba(0,0,0,.3) 60%, transparent) bottom / 100% 172px no-repeat,
    linear-gradient(148deg, transparent 0 76%, #120538 76%) bottom / 100% 172px no-repeat,
    linear-gradient(90deg, #070114 0, #0d022c 35%, #10043c 64%, #4a1268 66%, #3a0f60 78%, #240b58 84%, #120538 92%);
}
button { font: inherit; color: inherit; background: none; border: 0; padding: 0; }
a { color: var(--blue); text-decoration: none; }
svg { flex: none; }
.sprite { position: absolute; width: 0; height: 0; }
.g-sans { font-family: var(--ui); }
.g-mono { font-family: var(--mono); }
.icon-btn { display: flex; align-items: center; }

.menubar {
  height: 48px;
  flex: none;
  display: flex;
  justify-content: space-between;
  align-items: center;
  padding: 0 38px 2px;
  font: 500 25px/32px var(--ui);
  color: #eceaf4;
}
.menus, .status { display: flex; align-items: center; }
.menus { gap: 42px; }
.apple { width: 27px; height: 36px; }
.app { font-weight: 700; }
.status { gap: 34px; }
.clock { font-size: 26px; font-weight: 400; }

.window {
  flex: 1;
  min-height: 0;
  margin-top: 1px;
  display: flex;
  flex-direction: column;
  border-top: 2px solid #5d5c64;
  border-radius: 20px;
  overflow: hidden;
  background: #fff;
  box-shadow: 0 0 0 1px #000;
}
.tabstrip {
  height: 87px;
  flex: none;
  display: flex;
  align-items: center;
  background: #1c1b22;
  font: 22px/32px var(--ui);
  color: #c4c3c8;
}
.lights { width: 216px; padding-left: 26px; display: flex; gap: 16px; flex: none; }
.lights i { width: 24px; height: 24px; border-radius: 50%; }
.red { background: #ed6a5e; }
.amber { background: #f5bf4f; }
.green { background: #62c554; }
.tabs { flex: 1; display: flex; gap: 8px; height: 72px; }
.tab { flex: 1 1 0; min-width: 0; display: flex; align-items: center; gap: 11px; padding: 0 12px 0 16px; border-radius: 8px; }
.fav { width: 32px; height: 32px; }
.tab-title {
  flex: 1;
  min-width: 0;
  overflow: hidden;
  white-space: nowrap;
  -webkit-mask-image: linear-gradient(90deg, #000 calc(100% - 52px), transparent);
  mask-image: linear-gradient(90deg, #000 calc(100% - 52px), transparent);
}
.tab.active { background: #42414d; color: #fbfbfe; }
.tab.active .icon-btn { margin: 0 12px 0 -6px; }
.new-tab { width: 164px; padding-left: 30px; flex: none; }

.toolbar {
  height: 82px;
  flex: none;
  display: flex;
  align-items: center;
  background: #2b2a33;
  border-bottom: 2px solid #0c0c0e;
}
.nav-btns { width: 462px; flex: none; padding-left: 33px; display: flex; gap: 42px; align-items: center; }
.urlbar {
  flex: 1;
  min-width: 0;
  height: 64px;
  display: flex;
  align-items: center;
  gap: 28px;
  padding: 0 14px 0 18px;
  border-radius: 8px;
  background: #1c1b22;
}
.url { flex: 1; min-width: 0; font: 27px/36px var(--ui); color: #96959c; white-space: nowrap; overflow: hidden; margin-left: -6px; }
.url b { font-weight: 400; color: #fbfbfe; }
.exts { width: 534px; flex: none; display: flex; justify-content: flex-end; align-items: center; gap: 42px; padding-right: 36px; }
.ext { position: relative; display: flex; }
.badge {
  position: absolute;
  left: 11px;
  top: -10px;
  width: 28px;
  height: 24px;
  border-radius: 4px;
  background: #6c6c6e;
  color: #fff;
  font: 500 20px/24px var(--ui);
  text-align: center;
}
.teal { background: #35505f; }

.page { flex: 1; min-height: 0; display: flex; flex-direction: column; background: #fff; position: relative; }
.page-head { padding: 31px 80px; border-bottom: 2px solid var(--line); flex: none; }
.crumbs { display: flex; font-size: 24px; line-height: 32px; }
.sep { color: var(--blue); margin: 0 25px 0 17px; }
.sep:has(+ .tight) { margin-right: 15px; }
.here { color: #999; }
.title { margin: 32px 0 18px; display: flex; align-items: center; gap: 17px; font-size: 34px; line-height: 44px; font-weight: 600; color: #333; }
.title svg { color: var(--blue); }
.stats { display: flex; align-items: center; font-size: 26px; line-height: 36px; color: #666; gap: 31px; }
.stat { display: flex; align-items: center; gap: 9px; }
.rating { gap: 3px; }
.tags { margin-right: 4px; }
.st { width: 28px; height: 26px; color: #808080; }
.on { color: #fbd63f; }
.page-tabs { flex: none; height: 102px; display: flex; gap: 60px; padding: 0 80px; background: #fafafa; border-bottom: 2px solid var(--line); font-size: 28px; font-weight: 600; }
.page-tabs a { color: #333; line-height: 96px; height: 100px; border-bottom: 6px solid transparent; }
.page-tabs .current { color: var(--blue); border-color: var(--blue); }

.split { flex: 1; min-height: 0; margin-bottom: 42px; display: grid; grid-template-columns: 5fr 6fr; }
.problem { position: relative; min-height: 0; border-right: 2px solid var(--line); padding: 40px 140px 0 80px; color: #666; font-size: 28px; line-height: 46px; max-height: 1480px; }
.statement { display: flex; flex-direction: column; gap: 29px; }
.statement > * { margin: 0; }
.problem h2 { font-size: 33px; line-height: 41px; font-weight: 600; color: #333; }
.problem h3 { font-size: 28px; line-height: 46px; font-weight: 600; color: #333; }
.problem pre, .mono { font: 28px/46px var(--mono); }
.problem ul { padding-left: 80px; line-height: 39px; }
.math { font-family: "Liberation Serif", serif; font-size: 34px; line-height: 34px; }
i.math { margin: 0 3px; }
p.math { line-height: 46px; }
.math sup { font-size: 24px; line-height: 0; }
.rel { font-family: "DejaVu Sans", sans-serif; font-size: 30px; font-weight: 400; line-height: 30px; margin: 0 3px; }
.samples { border-collapse: separate; border-spacing: 0; width: 100%; table-layout: fixed; border: 2px solid #e4e6e6; border-radius: 6px; }
.samples th { height: 70px; padding: 15px 30px 0 20px; text-align: left; vertical-align: top; border-bottom: 2px solid #e4e6e6; font-size: 24px; line-height: 32px; font-weight: 600; color: #a0a4a8; }
.samples th .icon-btn { float: right; color: var(--blue); margin-top: 4px; }
.samples td { padding: 23px 20px 18px; vertical-align: top; font: 24px/32px var(--mono); color: var(--ink); }
.samples th:first-child, .samples td:first-child { border-right: 2px solid #e4e6e6; }
.limits { height: 117px; overflow: hidden; margin-top: 16px; font-size: 24px; line-height: 44px; color: #a0a4a8; }
.drag {
  position: absolute;
  right: -29px;
  top: 52%;
  transform: translateY(-50%);
  width: 58px;
  height: 58px;
  border-radius: 50%;
  border: 2px solid #d8d8d8;
  background: #fff;
  display: flex;
  align-items: center;
  justify-content: center;
}

.submission { min-width: 0; min-height: 0; overflow: hidden; padding-left: 40px; color: var(--ink); }
.banner { height: 128px; margin-top: -82px; display: flex; align-items: flex-end; padding: 0 64px 24px 66px; background: #f1f3f8; }
.banner-icon { width: 80px; height: 80px; }
.banner-text { width: 270px; height: 8px; margin: 0 0 15px 118px; }
.banner-actions { margin-left: auto; padding-bottom: 18px; display: flex; gap: 22px; }
.btn { height: 64px; border-radius: 6px; }
.outline { width: 334px; border: 3px solid var(--blue); background: #fff; }
.solid { width: 230px; background: var(--blue); }
.card { margin: 61px 355px 0 0; border: 2px solid #e4e6e8; border-radius: 6px; }
.card-head { height: 42px; padding: 0 20px; background: #f3f3f3; border-bottom: 2px solid #e4e6e8; font-size: 20px; line-height: 40px; }
.card-body { padding: 69px 20px 60px; font-size: 28px; }
.result { display: flex; justify-content: space-between; padding: 0 30px 20px; border-bottom: 2px solid #e4e6e8; line-height: 40px; }
.result b { font-weight: 600; }
.verdict, .env { display: flex; align-items: center; gap: 9px; }
.meta { margin: 0 0 62px; padding: 20px 30px 0; display: flex; gap: 158px; line-height: 44px; }
.meta dt { font-weight: 600; }
.meta dd { margin: 0; color: #a0a4a8; }
.runs { border-collapse: collapse; table-layout: fixed; width: 1335px; font-size: 28px; line-height: 38px; text-align: center; }
.runs th, .runs td { border: 2px solid #d8d8d8; padding: 0 0 1px; white-space: nowrap; }
.runs th { height: 61px; vertical-align: bottom; font-weight: 600; }
.runs td { height: 87px; }
.runs th:first-child, .runs td:first-child { padding-left: 27px; }
.c-input, .c-result { width: 182px; }
.c-time { width: 161px; }
.c-mem { width: 209px; }
.c-score { width: 98px; }
.c-yours { width: 192px; }
.c-correct { width: 231px; }
.c-diff { width: 80px; }
.acc { display: flex; justify-content: center; align-items: center; gap: 8px; }
.acc svg { width: 28px; height: 28px; }
.doc { width: 28px; height: 34px; display: block; margin: 0 auto; color: var(--blue); }
.doc.off { color: #e4e6e6; }

.help-fab {
  position: absolute;
  right: 32px;
  bottom: 20px;
  width: 84px;
  height: 84px;
  border-radius: 50%;
  background: #949a9f;
  color: #fff;
  display: flex;
  align-items: center;
  justify-content: center;
}

.dock {
  position: relative;
  z-index: 2;
  flex: none;
  align-self: center;
  margin: 2px 0 10px;
  height: 158px;
  padding: 0 4px;
  display: flex;
  border: 2px solid rgba(255,255,255,.18);
  border-radius: 44px;
  background: linear-gradient(100deg, #1c1430 0, #1e1338 40%, #241448 58%, #3f1660 66%, #451768 82%, #30185a 100%);
  box-shadow: 0 0 90px rgba(0,0,0,.32);
}
.app-icon { width: 136px; height: 100%; display: flex; flex-direction: column; align-items: center; padding-top: 20px; }
.app-icon svg { width: 104px; height: 104px; }
.app-icon .bleed { width: 116px; height: 118px; margin: -8px 0 -6px; overflow: visible; }
.app-icon .thumb { width: 120px; height: 104px; margin-top: 6px; }
.run::after { content: ""; width: 8px; height: 8px; border-radius: 50%; background: #a795c8; margin-top: 20px; }
.dock-sep { width: 2px; height: 118px; margin: 18px 30px; background: rgba(255,255,255,.26); }
```
